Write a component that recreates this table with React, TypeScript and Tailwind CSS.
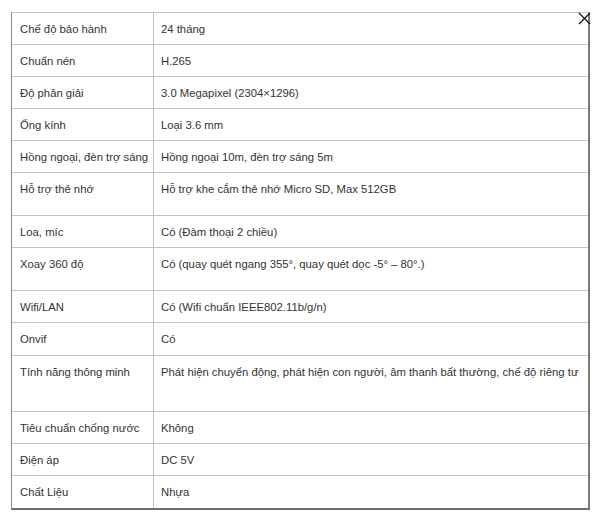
import React from "react";

const rows: { k: string; v: string; h: string }[] = [
  { k: "Chế độ bảo hành", v: "24 tháng", h: "h-[32px]" },
  { k: "Chuẩn nén", v: "H.265", h: "h-[32px]" },
  { k: "Độ phân giải", v: "3.0 Megapixel (2304×1296)", h: "h-[32px]" },
  { k: "Ống kính", v: "Loại 3.6 mm", h: "h-[32px]" },
  { k: "Hồng ngoại, đèn trợ sáng", v: "Hồng ngoại 10m, đèn trợ sáng 5m", h: "h-[32px]" },
  { k: "Hỗ trợ thẻ nhớ", v: "Hỗ trợ khe cắm thẻ nhớ Micro SD, Max 512GB", h: "h-[43px]" },
  { k: "Loa, míc", v: "Có (Đàm thoại 2 chiều)", h: "h-[32px]" },
  { k: "Xoay 360 độ", v: "Có (quay quét ngang 355°, quay quét dọc -5° – 80°.)", h: "h-[43px]" },
  { k: "Wifi/LAN", v: "Có (Wifi chuẩn IEEE802.11b/g/n)", h: "h-[32px]" },
  { k: "Onvif", v: "Có", h: "h-[33px]" },
  { k: "Tính năng thông minh", v: "Phát hiện chuyển động, phát hiện con người, âm thanh bất thường, chế độ riêng tư", h: "h-[56px]" },
  { k: "Tiêu chuẩn chống nước", v: "Không", h: "h-[32px]" },
  { k: "Điện áp", v: "DC 5V", h: "h-[32px]" },
  { k: "Chất Liệu", v: "Nhựa", h: "h-[32px]" },
];

export default function App() {
  return (
    <div className="w-[600px] h-[523px] bg-white relative pt-[12px] pl-[11px]" style={{ fontFamily: '"Liberation Sans", Arial, sans-serif' }}>
      <div className="w-[579px] border-t border-t-[#c4c4c4] border-l-[1.5px] border-l-[#8a8a8a] border-r-2 border-r-[#7a7a7a] border-b-2 border-b-[#6f6f6f] text-[11.3px] text-[#333]">
        {rows.map((r, i) => (
          <div key={i} className={`flex ${r.h} ${i < rows.length - 1 ? "border-b border-b-[#c4c4c4]" : ""}`}>
            <div className="w-[142px] shrink-0 border-r border-r-[#c4c4c4] pl-[8px] pt-[8px] leading-[16px] whitespace-nowrap">{r.k}</div>
            <div className="flex-1 pl-[7px] pt-[8px] leading-[16px] whitespace-nowrap">{r.v}</div>
          </div>
        ))}
      </div>
      <svg className="absolute left-[578px] top-[12px]" width="13" height="13" viewBox="0 0 13 13">
        <path d="M1 1 L12 12 M12 1 L1 12" stroke="#111" strokeWidth="1.3" />
      </svg>
    </div>
  );
}
